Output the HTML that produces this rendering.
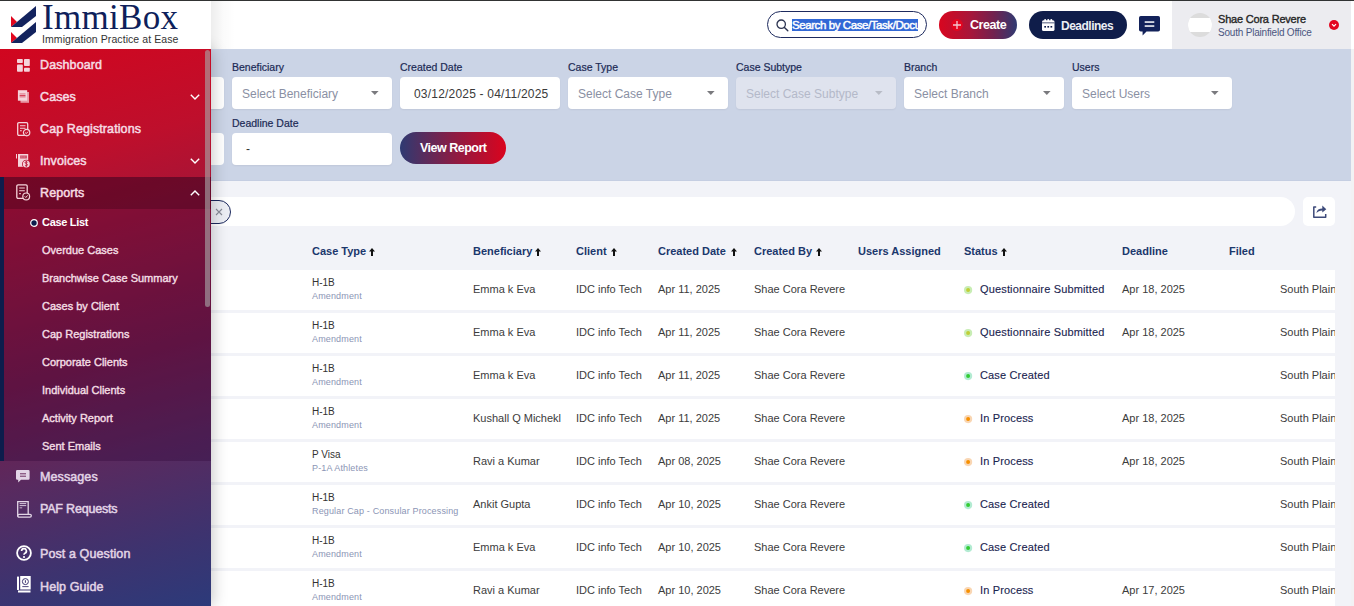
<!DOCTYPE html><html><head><meta charset="utf-8"><style>
*{margin:0;padding:0;box-sizing:border-box}
html,body{width:1354px;height:606px;overflow:hidden;background:#f0f2f7;font-family:"Liberation Sans",sans-serif}
.a{position:absolute}
.t{position:absolute;white-space:nowrap}
svg{position:absolute;overflow:visible}
</style></head><body>
<div class="a" style="left:0px;top:0px;width:1354px;height:606px;background:#f2f3f8"></div>
<div class="a" style="left:211px;top:49px;width:1140px;height:132px;background:#cbd4e6"></div>
<div class="a" style="left:211px;top:180px;width:1140px;height:1px;background:#c5cee2"></div>
<div class="a" style="left:1351px;top:49px;width:3px;height:557px;background:#f2f2f4"></div>
<div class="a" style="left:0px;top:0px;width:1354px;height:49px;background:#fff"></div>
<div class="a" style="left:1172px;top:1px;width:179px;height:48px;background:#ececf0"></div>
<div class="a" style="left:0px;top:0px;width:1354px;height:1px;background:#313333"></div>
<div class="a" style="left:767px;top:11px;width:160px;height:27px;border:1.3px solid #1d2a5e;border-radius:14px;background:#fff"></div>
<svg style="left:776px;top:19px" width="13" height="13" viewBox="0 0 13 13"><circle cx="5.2" cy="5.2" r="4.2" fill="none" stroke="#2b3350" stroke-width="1.3"/><line x1="8.2" y1="8.2" x2="11.8" y2="11.8" stroke="#2b3350" stroke-width="1.4" stroke-linecap="round"/></svg>
<div class="a" style="left:792px;top:19px;width:126px;height:12px;background:#3168d6"></div>
<div class="a" style="left:792px;top:17px;width:126px;height:16px;overflow:hidden"><div class="t" style="left:0px;top:0.73px;font-size:11.5px;line-height:14.38px;font-weight:400;color:#fff;-webkit-text-stroke:0.45px #fff;letter-spacing:-0.42px">Search by Case/Task/Document</div>
</div>
<div class="a" style="left:939px;top:11px;width:78px;height:28px;border-radius:14px;background:linear-gradient(90deg,#d8061f 0%,#a8163a 40%,#72224f 70%,#2f3a72 100%)"></div>
<svg style="left:951px;top:19px" width="12" height="12" viewBox="0 0 12 12"><circle cx="6" cy="6" r="5.9" fill="#e3061f"/><path d="M6 2V10M2 6H10" stroke="#f2c8d0" stroke-width="1.3"/></svg>
<div class="t" style="left:970px;top:18.36px;font-size:12.5px;line-height:15.62px;font-weight:700;color:#fff;letter-spacing:-0.45px">Create</div>
<div class="a" style="left:1029px;top:11px;width:98px;height:28px;border-radius:14px;background:#0f1d4a"></div>
<svg style="left:1042px;top:19px" width="12.5" height="12" viewBox="0 0 12.5 12"><rect x="0" y="1.2" width="12.5" height="10.8" rx="1.6" fill="#fff"/><rect x="2.4" y="0" width="1.6" height="2.4" rx="0.6" fill="#fff"/><rect x="5.45" y="0" width="1.6" height="2.4" rx="0.6" fill="#fff"/><rect x="8.5" y="0" width="1.6" height="2.4" rx="0.6" fill="#fff"/><rect x="0" y="3.4" width="12.5" height="0.9" fill="#0f1d4a" opacity="0.8"/><rect x="2.3" y="7" width="1.7" height="1.6" fill="#0f1d4a"/><rect x="5.4" y="7" width="1.7" height="1.6" fill="#0f1d4a"/><rect x="8.5" y="7" width="1.7" height="1.6" fill="#0f1d4a"/></svg>
<div class="t" style="left:1061px;top:18.84px;font-size:12px;line-height:15.0px;font-weight:700;color:#eceef4;letter-spacing:-0.5px">Deadlines</div>
<svg style="left:1139px;top:16px" width="21" height="20" viewBox="0 0 21 20"><path d="M1.8 0H19.2A1.8 1.8 0 0 1 21 1.8V13.8A1.8 1.8 0 0 1 19.2 15.6H7.5L3.6 19.4V15.6H1.8A1.8 1.8 0 0 1 0 13.8V1.8A1.8 1.8 0 0 1 1.8 0Z" fill="#13225a"/><rect x="5.7" y="5.3" width="9.6" height="1.5" fill="#fff"/><rect x="5.7" y="9.3" width="9.6" height="1.5" fill="#fff"/></svg>
<div class="a" style="left:1188px;top:13px;width:24px;height:24px;border-radius:50%;overflow:hidden;background:#dcdcdc"><div class="a" style="left:0;top:5px;width:24px;height:14px;background:#fff"></div></div>
<div class="t" style="left:1218px;top:12.81px;font-size:11px;line-height:13.75px;font-weight:400;color:#262626;-webkit-text-stroke:0.35px #262626;letter-spacing:-0.2px">Shae Cora Revere</div>
<div class="t" style="left:1218px;top:27.29px;font-size:10px;line-height:12.5px;font-weight:400;color:#4b5680;letter-spacing:-0.2px">South Plainfield Office</div>
<svg style="left:1329px;top:20px" width="10" height="10" viewBox="0 0 10 10"><circle cx="5" cy="5" r="5" fill="#e3061f"/><path d="M3 4.2L5 6.2L7 4.2" fill="none" stroke="#fff" stroke-width="1.2"/></svg>
<div class="t" style="left:232px;top:61.30px;font-size:10.5px;line-height:13.12px;font-weight:400;color:#1b2a55;-webkit-text-stroke:0.2px #1b2a55">Beneficiary</div>
<div class="t" style="left:400px;top:61.30px;font-size:10.5px;line-height:13.12px;font-weight:400;color:#1b2a55;-webkit-text-stroke:0.2px #1b2a55">Created Date</div>
<div class="t" style="left:568px;top:61.30px;font-size:10.5px;line-height:13.12px;font-weight:400;color:#1b2a55;-webkit-text-stroke:0.2px #1b2a55">Case Type</div>
<div class="t" style="left:736px;top:61.30px;font-size:10.5px;line-height:13.12px;font-weight:400;color:#1b2a55;-webkit-text-stroke:0.2px #1b2a55">Case Subtype</div>
<div class="t" style="left:904px;top:61.30px;font-size:10.5px;line-height:13.12px;font-weight:400;color:#1b2a55;-webkit-text-stroke:0.2px #1b2a55">Branch</div>
<div class="t" style="left:1072px;top:61.30px;font-size:10.5px;line-height:13.12px;font-weight:400;color:#1b2a55;-webkit-text-stroke:0.2px #1b2a55">Users</div>
<div class="t" style="left:232px;top:117.30px;font-size:10.5px;line-height:13.12px;font-weight:400;color:#1b2a55;-webkit-text-stroke:0.2px #1b2a55">Deadline Date</div>
<div class="a" style="left:64px;top:77px;width:160px;height:32px;background:#fff;border-radius:4px;box-shadow:0 1px 2px rgba(0,0,0,0.06)"></div>
<div class="a" style="left:232px;top:77px;width:160px;height:32px;background:#fff;border-radius:4px;box-shadow:0 1px 2px rgba(0,0,0,0.06)"></div>
<div class="t" style="left:242px;top:87.34px;font-size:12px;line-height:15.0px;font-weight:400;color:#8a90a3;">Select Beneficiary</div>
<svg style="left:371.2px;top:91px" width="7.6" height="4" viewBox="0 0 7.6 4"><path d="M0 0H7.6L3.8 4Z" fill="#7a7a7e"/></svg>
<div class="a" style="left:400px;top:77px;width:160px;height:32px;background:#fff;border-radius:4px;box-shadow:0 1px 2px rgba(0,0,0,0.06)"></div>
<div class="t" style="left:414px;top:87.34px;font-size:12px;line-height:15.0px;font-weight:400;color:#3a3a3a;letter-spacing:0.2px">03/12/2025 - 04/11/2025</div>
<div class="a" style="left:568px;top:77px;width:160px;height:32px;background:#fff;border-radius:4px;box-shadow:0 1px 2px rgba(0,0,0,0.06)"></div>
<div class="t" style="left:578px;top:87.34px;font-size:12px;line-height:15.0px;font-weight:400;color:#8a90a3;">Select Case Type</div>
<svg style="left:707.2px;top:91px" width="7.6" height="4" viewBox="0 0 7.6 4"><path d="M0 0H7.6L3.8 4Z" fill="#7a7a7e"/></svg>
<div class="a" style="left:736px;top:77px;width:160px;height:32px;background:#dfe3ee;border-radius:4px;box-shadow:0 1px 2px rgba(0,0,0,0.06)"></div>
<div class="t" style="left:746px;top:87.34px;font-size:12px;line-height:15.0px;font-weight:400;color:#b4b9c9;">Select Case Subtype</div>
<svg style="left:875.2px;top:91px" width="7.6" height="4" viewBox="0 0 7.6 4"><path d="M0 0H7.6L3.8 4Z" fill="#b8bcc6"/></svg>
<div class="a" style="left:904px;top:77px;width:160px;height:32px;background:#fff;border-radius:4px;box-shadow:0 1px 2px rgba(0,0,0,0.06)"></div>
<div class="t" style="left:914px;top:87.34px;font-size:12px;line-height:15.0px;font-weight:400;color:#8a90a3;">Select Branch</div>
<svg style="left:1043.2px;top:91px" width="7.6" height="4" viewBox="0 0 7.6 4"><path d="M0 0H7.6L3.8 4Z" fill="#7a7a7e"/></svg>
<div class="a" style="left:1072px;top:77px;width:160px;height:32px;background:#fff;border-radius:4px;box-shadow:0 1px 2px rgba(0,0,0,0.06)"></div>
<div class="t" style="left:1082px;top:87.34px;font-size:12px;line-height:15.0px;font-weight:400;color:#8a90a3;">Select Users</div>
<svg style="left:1211.2px;top:91px" width="7.6" height="4" viewBox="0 0 7.6 4"><path d="M0 0H7.6L3.8 4Z" fill="#7a7a7e"/></svg>
<div class="a" style="left:64px;top:133px;width:160px;height:32px;background:#fff;border-radius:4px"></div>
<div class="a" style="left:232px;top:133px;width:160px;height:32px;background:#fff;border-radius:4px;box-shadow:0 1px 2px rgba(0,0,0,0.06)"></div>
<div class="t" style="left:246px;top:142.34px;font-size:12px;line-height:15.0px;font-weight:400;color:#333;">-</div>
<div class="a" style="left:400px;top:132px;width:106px;height:32px;border-radius:16px;background:linear-gradient(90deg,#2e3a72 0%,#8a1c44 50%,#da041e 100%)"></div>
<div class="t" style="left:420px;top:140.86px;font-size:12.5px;line-height:15.62px;font-weight:700;color:#fff;letter-spacing:-0.5px">View Report</div>
<div class="a" style="left:211px;top:197px;width:1084px;height:29px;background:#fff;border-radius:0 15px 15px 0"></div>
<div class="a" style="left:150px;top:200px;width:81px;height:24px;background:#eceef4;border:1.3px solid #1d2a5e;border-radius:12px"></div>
<svg style="left:216px;top:209px" width="6" height="6" viewBox="0 0 6 6"><path d="M0 0L6 6M6 0L0 6" stroke="#8a8d99" stroke-width="1.1"/></svg>
<div class="a" style="left:1303px;top:197px;width:32px;height:29px;background:#fff;border-radius:5px"></div>
<svg style="left:1313px;top:205px" width="14" height="13" viewBox="0 0 14 13"><path d="M3.2 2H0.8V12.2H12.7V9" fill="none" stroke="#3d4a7a" stroke-width="1.5" stroke-linejoin="round"/><path d="M3.4 8.2C3.8 5 6.2 3.6 9.3 3.6V0.6L13.3 4.2L9.3 7.6V5.6C6.8 5.6 5 6.4 3.4 8.2Z" fill="#3d4a7a"/></svg>
<div class="t" style="left:312px;top:245.31px;font-size:11px;line-height:13.75px;font-weight:700;color:#1b376c;">Case Type</div>
<div class="t" style="left:473px;top:245.31px;font-size:11px;line-height:13.75px;font-weight:700;color:#1b376c;">Beneficiary</div>
<div class="t" style="left:576px;top:245.31px;font-size:11px;line-height:13.75px;font-weight:700;color:#1b376c;">Client</div>
<div class="t" style="left:658px;top:245.31px;font-size:11px;line-height:13.75px;font-weight:700;color:#1b376c;">Created Date</div>
<div class="t" style="left:754px;top:245.31px;font-size:11px;line-height:13.75px;font-weight:700;color:#1b376c;">Created By</div>
<div class="t" style="left:858px;top:245.31px;font-size:11px;line-height:13.75px;font-weight:700;color:#1b376c;">Users Assigned</div>
<div class="t" style="left:964px;top:245.31px;font-size:11px;line-height:13.75px;font-weight:700;color:#1b376c;">Status</div>
<div class="t" style="left:1122px;top:245.31px;font-size:11px;line-height:13.75px;font-weight:700;color:#1b376c;">Deadline</div>
<div class="t" style="left:1229px;top:245.31px;font-size:11px;line-height:13.75px;font-weight:700;color:#1b376c;">Filed</div>
<svg style="left:369px;top:248px" width="6" height="8" viewBox="0 0 6 8"><path d="M3 0L6 3.4H4V8H2V3.4H0Z" fill="#111"/></svg>
<svg style="left:535px;top:248px" width="6" height="8" viewBox="0 0 6 8"><path d="M3 0L6 3.4H4V8H2V3.4H0Z" fill="#111"/></svg>
<svg style="left:611px;top:248px" width="6" height="8" viewBox="0 0 6 8"><path d="M3 0L6 3.4H4V8H2V3.4H0Z" fill="#111"/></svg>
<svg style="left:731px;top:248px" width="6" height="8" viewBox="0 0 6 8"><path d="M3 0L6 3.4H4V8H2V3.4H0Z" fill="#111"/></svg>
<svg style="left:816px;top:248px" width="6" height="8" viewBox="0 0 6 8"><path d="M3 0L6 3.4H4V8H2V3.4H0Z" fill="#111"/></svg>
<svg style="left:1001px;top:248px" width="6" height="8" viewBox="0 0 6 8"><path d="M3 0L6 3.4H4V8H2V3.4H0Z" fill="#111"/></svg>
<div class="a" style="left:211px;top:270px;width:1124px;height:40px;background:#fff"></div>
<div class="t" style="left:312px;top:277.29px;font-size:10px;line-height:12.5px;font-weight:400;color:#333;">H-1B</div>
<div class="t" style="left:312px;top:290.76px;font-size:9px;line-height:11.25px;font-weight:400;color:#8b95b5;letter-spacing:0.15px">Amendment</div>
<div class="t" style="left:473px;top:283.31px;font-size:11px;line-height:13.75px;font-weight:400;color:#3c3c3c;">Emma k Eva</div>
<div class="t" style="left:576px;top:283.31px;font-size:11px;line-height:13.75px;font-weight:400;color:#3c3c3c;">IDC info Tech</div>
<div class="t" style="left:658px;top:283.31px;font-size:11px;line-height:13.75px;font-weight:400;color:#3c3c3c;">Apr 11, 2025</div>
<div class="t" style="left:754px;top:283.31px;font-size:11px;line-height:13.75px;font-weight:400;color:#3c3c3c;">Shae Cora Revere</div>
<svg style="left:963.8px;top:285.8px" width="8.2" height="8.2" viewBox="0 0 8.2 8.2"><circle cx="4.1" cy="4.1" r="4.1" fill="#c8edb4"/><circle cx="4.1" cy="4.1" r="2" fill="#bfcf36"/></svg>
<div class="t" style="left:980px;top:283.31px;font-size:11px;line-height:13.75px;font-weight:400;color:#1b2550;-webkit-text-stroke:0.12px #1b2550;letter-spacing:0.15px">Questionnaire Submitted</div>
<div class="t" style="left:1122px;top:283.31px;font-size:11px;line-height:13.75px;font-weight:400;color:#3c3c3c;">Apr 18, 2025</div>
<div class="a" style="left:1280px;top:280px;width:55px;height:20px;overflow:hidden"><div class="t" style="left:0px;top:3.31px;font-size:11px;line-height:13.75px;font-weight:400;color:#3c3c3c;">South Plainfield</div>
</div>
<div class="a" style="left:211px;top:313px;width:1124px;height:40px;background:#fff"></div>
<div class="t" style="left:312px;top:320.29px;font-size:10px;line-height:12.5px;font-weight:400;color:#333;">H-1B</div>
<div class="t" style="left:312px;top:333.76px;font-size:9px;line-height:11.25px;font-weight:400;color:#8b95b5;letter-spacing:0.15px">Amendment</div>
<div class="t" style="left:473px;top:326.31px;font-size:11px;line-height:13.75px;font-weight:400;color:#3c3c3c;">Emma k Eva</div>
<div class="t" style="left:576px;top:326.31px;font-size:11px;line-height:13.75px;font-weight:400;color:#3c3c3c;">IDC info Tech</div>
<div class="t" style="left:658px;top:326.31px;font-size:11px;line-height:13.75px;font-weight:400;color:#3c3c3c;">Apr 11, 2025</div>
<div class="t" style="left:754px;top:326.31px;font-size:11px;line-height:13.75px;font-weight:400;color:#3c3c3c;">Shae Cora Revere</div>
<svg style="left:963.8px;top:328.8px" width="8.2" height="8.2" viewBox="0 0 8.2 8.2"><circle cx="4.1" cy="4.1" r="4.1" fill="#c8edb4"/><circle cx="4.1" cy="4.1" r="2" fill="#bfcf36"/></svg>
<div class="t" style="left:980px;top:326.31px;font-size:11px;line-height:13.75px;font-weight:400;color:#1b2550;-webkit-text-stroke:0.12px #1b2550;letter-spacing:0.15px">Questionnaire Submitted</div>
<div class="t" style="left:1122px;top:326.31px;font-size:11px;line-height:13.75px;font-weight:400;color:#3c3c3c;">Apr 18, 2025</div>
<div class="a" style="left:1280px;top:323px;width:55px;height:20px;overflow:hidden"><div class="t" style="left:0px;top:3.31px;font-size:11px;line-height:13.75px;font-weight:400;color:#3c3c3c;">South Plainfield</div>
</div>
<div class="a" style="left:211px;top:356px;width:1124px;height:40px;background:#fff"></div>
<div class="t" style="left:312px;top:363.29px;font-size:10px;line-height:12.5px;font-weight:400;color:#333;">H-1B</div>
<div class="t" style="left:312px;top:376.76px;font-size:9px;line-height:11.25px;font-weight:400;color:#8b95b5;letter-spacing:0.15px">Amendment</div>
<div class="t" style="left:473px;top:369.31px;font-size:11px;line-height:13.75px;font-weight:400;color:#3c3c3c;">Emma k Eva</div>
<div class="t" style="left:576px;top:369.31px;font-size:11px;line-height:13.75px;font-weight:400;color:#3c3c3c;">IDC info Tech</div>
<div class="t" style="left:658px;top:369.31px;font-size:11px;line-height:13.75px;font-weight:400;color:#3c3c3c;">Apr 11, 2025</div>
<div class="t" style="left:754px;top:369.31px;font-size:11px;line-height:13.75px;font-weight:400;color:#3c3c3c;">Shae Cora Revere</div>
<svg style="left:963.8px;top:371.8px" width="8.2" height="8.2" viewBox="0 0 8.2 8.2"><circle cx="4.1" cy="4.1" r="4.1" fill="#b3ebd2"/><circle cx="4.1" cy="4.1" r="2" fill="#33cc33"/></svg>
<div class="t" style="left:980px;top:369.31px;font-size:11px;line-height:13.75px;font-weight:400;color:#1b2550;-webkit-text-stroke:0.12px #1b2550;letter-spacing:0.15px">Case Created</div>
<div class="a" style="left:1280px;top:366px;width:55px;height:20px;overflow:hidden"><div class="t" style="left:0px;top:3.31px;font-size:11px;line-height:13.75px;font-weight:400;color:#3c3c3c;">South Plainfield</div>
</div>
<div class="a" style="left:211px;top:399px;width:1124px;height:40px;background:#fff"></div>
<div class="t" style="left:312px;top:406.29px;font-size:10px;line-height:12.5px;font-weight:400;color:#333;">H-1B</div>
<div class="t" style="left:312px;top:419.76px;font-size:9px;line-height:11.25px;font-weight:400;color:#8b95b5;letter-spacing:0.15px">Amendment</div>
<div class="t" style="left:473px;top:412.31px;font-size:11px;line-height:13.75px;font-weight:400;color:#3c3c3c;">Kushall Q Michekl</div>
<div class="t" style="left:576px;top:412.31px;font-size:11px;line-height:13.75px;font-weight:400;color:#3c3c3c;">IDC info Tech</div>
<div class="t" style="left:658px;top:412.31px;font-size:11px;line-height:13.75px;font-weight:400;color:#3c3c3c;">Apr 11, 2025</div>
<div class="t" style="left:754px;top:412.31px;font-size:11px;line-height:13.75px;font-weight:400;color:#3c3c3c;">Shae Cora Revere</div>
<svg style="left:963.8px;top:414.8px" width="8.2" height="8.2" viewBox="0 0 8.2 8.2"><circle cx="4.1" cy="4.1" r="4.1" fill="#f9d6b3"/><circle cx="4.1" cy="4.1" r="2" fill="#f79000"/></svg>
<div class="t" style="left:980px;top:412.31px;font-size:11px;line-height:13.75px;font-weight:400;color:#1b2550;-webkit-text-stroke:0.12px #1b2550;letter-spacing:0.15px">In Process</div>
<div class="t" style="left:1122px;top:412.31px;font-size:11px;line-height:13.75px;font-weight:400;color:#3c3c3c;">Apr 18, 2025</div>
<div class="a" style="left:1280px;top:409px;width:55px;height:20px;overflow:hidden"><div class="t" style="left:0px;top:3.31px;font-size:11px;line-height:13.75px;font-weight:400;color:#3c3c3c;">South Plainfield</div>
</div>
<div class="a" style="left:211px;top:442px;width:1124px;height:40px;background:#fff"></div>
<div class="t" style="left:312px;top:449.29px;font-size:10px;line-height:12.5px;font-weight:400;color:#333;">P Visa</div>
<div class="t" style="left:312px;top:462.76px;font-size:9px;line-height:11.25px;font-weight:400;color:#8b95b5;letter-spacing:0.15px">P-1A Athletes</div>
<div class="t" style="left:473px;top:455.31px;font-size:11px;line-height:13.75px;font-weight:400;color:#3c3c3c;">Ravi a Kumar</div>
<div class="t" style="left:576px;top:455.31px;font-size:11px;line-height:13.75px;font-weight:400;color:#3c3c3c;">IDC info Tech</div>
<div class="t" style="left:658px;top:455.31px;font-size:11px;line-height:13.75px;font-weight:400;color:#3c3c3c;">Apr 08, 2025</div>
<div class="t" style="left:754px;top:455.31px;font-size:11px;line-height:13.75px;font-weight:400;color:#3c3c3c;">Shae Cora Revere</div>
<svg style="left:963.8px;top:457.8px" width="8.2" height="8.2" viewBox="0 0 8.2 8.2"><circle cx="4.1" cy="4.1" r="4.1" fill="#f9d6b3"/><circle cx="4.1" cy="4.1" r="2" fill="#f79000"/></svg>
<div class="t" style="left:980px;top:455.31px;font-size:11px;line-height:13.75px;font-weight:400;color:#1b2550;-webkit-text-stroke:0.12px #1b2550;letter-spacing:0.15px">In Process</div>
<div class="t" style="left:1122px;top:455.31px;font-size:11px;line-height:13.75px;font-weight:400;color:#3c3c3c;">Apr 18, 2025</div>
<div class="a" style="left:1280px;top:452px;width:55px;height:20px;overflow:hidden"><div class="t" style="left:0px;top:3.31px;font-size:11px;line-height:13.75px;font-weight:400;color:#3c3c3c;">South Plainfield</div>
</div>
<div class="a" style="left:211px;top:485px;width:1124px;height:40px;background:#fff"></div>
<div class="t" style="left:312px;top:492.29px;font-size:10px;line-height:12.5px;font-weight:400;color:#333;">H-1B</div>
<div class="t" style="left:312px;top:505.76px;font-size:9px;line-height:11.25px;font-weight:400;color:#8b95b5;letter-spacing:0.15px">Regular Cap - Consular Processing</div>
<div class="t" style="left:473px;top:498.31px;font-size:11px;line-height:13.75px;font-weight:400;color:#3c3c3c;">Ankit Gupta</div>
<div class="t" style="left:576px;top:498.31px;font-size:11px;line-height:13.75px;font-weight:400;color:#3c3c3c;">IDC info Tech</div>
<div class="t" style="left:658px;top:498.31px;font-size:11px;line-height:13.75px;font-weight:400;color:#3c3c3c;">Apr 10, 2025</div>
<div class="t" style="left:754px;top:498.31px;font-size:11px;line-height:13.75px;font-weight:400;color:#3c3c3c;">Shae Cora Revere</div>
<svg style="left:963.8px;top:500.8px" width="8.2" height="8.2" viewBox="0 0 8.2 8.2"><circle cx="4.1" cy="4.1" r="4.1" fill="#b3ebd2"/><circle cx="4.1" cy="4.1" r="2" fill="#33cc33"/></svg>
<div class="t" style="left:980px;top:498.31px;font-size:11px;line-height:13.75px;font-weight:400;color:#1b2550;-webkit-text-stroke:0.12px #1b2550;letter-spacing:0.15px">Case Created</div>
<div class="a" style="left:1280px;top:495px;width:55px;height:20px;overflow:hidden"><div class="t" style="left:0px;top:3.31px;font-size:11px;line-height:13.75px;font-weight:400;color:#3c3c3c;">South Plainfield</div>
</div>
<div class="a" style="left:211px;top:528px;width:1124px;height:40px;background:#fff"></div>
<div class="t" style="left:312px;top:535.28px;font-size:10px;line-height:12.5px;font-weight:400;color:#333;">H-1B</div>
<div class="t" style="left:312px;top:548.76px;font-size:9px;line-height:11.25px;font-weight:400;color:#8b95b5;letter-spacing:0.15px">Amendment</div>
<div class="t" style="left:473px;top:541.31px;font-size:11px;line-height:13.75px;font-weight:400;color:#3c3c3c;">Emma k Eva</div>
<div class="t" style="left:576px;top:541.31px;font-size:11px;line-height:13.75px;font-weight:400;color:#3c3c3c;">IDC info Tech</div>
<div class="t" style="left:658px;top:541.31px;font-size:11px;line-height:13.75px;font-weight:400;color:#3c3c3c;">Apr 10, 2025</div>
<div class="t" style="left:754px;top:541.31px;font-size:11px;line-height:13.75px;font-weight:400;color:#3c3c3c;">Shae Cora Revere</div>
<svg style="left:963.8px;top:543.8px" width="8.2" height="8.2" viewBox="0 0 8.2 8.2"><circle cx="4.1" cy="4.1" r="4.1" fill="#b3ebd2"/><circle cx="4.1" cy="4.1" r="2" fill="#33cc33"/></svg>
<div class="t" style="left:980px;top:541.31px;font-size:11px;line-height:13.75px;font-weight:400;color:#1b2550;-webkit-text-stroke:0.12px #1b2550;letter-spacing:0.15px">Case Created</div>
<div class="a" style="left:1280px;top:538px;width:55px;height:20px;overflow:hidden"><div class="t" style="left:0px;top:3.31px;font-size:11px;line-height:13.75px;font-weight:400;color:#3c3c3c;">South Plainfield</div>
</div>
<div class="a" style="left:211px;top:571px;width:1124px;height:40px;background:#fff"></div>
<div class="t" style="left:312px;top:578.28px;font-size:10px;line-height:12.5px;font-weight:400;color:#333;">H-1B</div>
<div class="t" style="left:312px;top:591.76px;font-size:9px;line-height:11.25px;font-weight:400;color:#8b95b5;letter-spacing:0.15px">Amendment</div>
<div class="t" style="left:473px;top:584.31px;font-size:11px;line-height:13.75px;font-weight:400;color:#3c3c3c;">Ravi a Kumar</div>
<div class="t" style="left:576px;top:584.31px;font-size:11px;line-height:13.75px;font-weight:400;color:#3c3c3c;">IDC info Tech</div>
<div class="t" style="left:658px;top:584.31px;font-size:11px;line-height:13.75px;font-weight:400;color:#3c3c3c;">Apr 10, 2025</div>
<div class="t" style="left:754px;top:584.31px;font-size:11px;line-height:13.75px;font-weight:400;color:#3c3c3c;">Shae Cora Revere</div>
<svg style="left:963.8px;top:586.8px" width="8.2" height="8.2" viewBox="0 0 8.2 8.2"><circle cx="4.1" cy="4.1" r="4.1" fill="#f9d6b3"/><circle cx="4.1" cy="4.1" r="2" fill="#f79000"/></svg>
<div class="t" style="left:980px;top:584.31px;font-size:11px;line-height:13.75px;font-weight:400;color:#1b2550;-webkit-text-stroke:0.12px #1b2550;letter-spacing:0.15px">In Process</div>
<div class="t" style="left:1122px;top:584.31px;font-size:11px;line-height:13.75px;font-weight:400;color:#3c3c3c;">Apr 17, 2025</div>
<div class="a" style="left:1280px;top:581px;width:55px;height:20px;overflow:hidden"><div class="t" style="left:0px;top:3.31px;font-size:11px;line-height:13.75px;font-weight:400;color:#3c3c3c;">South Plainfield</div>
</div>
<div class="a" style="left:0;top:49px;width:211px;height:557px;background:linear-gradient(165deg,#d1061f 0%,#be0f2c 20%,#9a173c 38%,#761b48 55%,#592a5f 72%,#3d336f 88%,#2c3a7a 100%);box-shadow:2px 0 14px rgba(0,0,0,0.22)"></div>
<div class="a" style="left:0px;top:1px;width:211px;height:48px;background:#fff"></div>
<div class="a" style="left:211px;top:1px;width:24px;height:48px;background:linear-gradient(90deg,rgba(0,0,0,0.07),rgba(0,0,0,0.02) 50%,rgba(0,0,0,0))"></div>
<div class="a" style="left:0px;top:177px;width:211px;height:284px;background:rgba(40,0,50,0.29)"></div>
<div class="a" style="left:4px;top:177px;width:207px;height:32px;background:rgba(40,0,15,0.28)"></div>
<div class="a" style="left:0px;top:177px;width:4px;height:284px;background:#0d1d4c"></div>
<div class="a" style="left:205px;top:49.5px;width:5px;height:257.5px;background:rgba(168,168,168,0.62);border-radius:2.5px"></div>
<div class="t" style="left:40px;top:57.86px;font-size:12.5px;line-height:15.62px;font-weight:400;color:#f6dbe2;-webkit-text-stroke:0.5px #f6dbe2;letter-spacing:0.1px">Dashboard</div>
<div class="t" style="left:40px;top:89.86px;font-size:12.5px;line-height:15.62px;font-weight:400;color:#f6dbe2;-webkit-text-stroke:0.5px #f6dbe2;letter-spacing:0.1px">Cases</div>
<div class="t" style="left:40px;top:121.86px;font-size:12.5px;line-height:15.62px;font-weight:400;color:#f6dbe2;-webkit-text-stroke:0.5px #f6dbe2;letter-spacing:0.1px">Cap Registrations</div>
<div class="t" style="left:40px;top:153.86px;font-size:12.5px;line-height:15.62px;font-weight:400;color:#f6dbe2;-webkit-text-stroke:0.5px #f6dbe2;letter-spacing:0.1px">Invoices</div>
<div class="t" style="left:40px;top:185.86px;font-size:12.5px;line-height:15.62px;font-weight:400;color:#f6dbe2;-webkit-text-stroke:0.5px #f6dbe2;letter-spacing:0.1px">Reports</div>
<div class="t" style="left:42px;top:216.31px;font-size:11px;line-height:13.75px;font-weight:700;color:#fff;letter-spacing:-0.3px">Case List</div>
<div class="t" style="left:42px;top:244.31px;font-size:11px;line-height:13.75px;font-weight:400;color:#f3dde3;-webkit-text-stroke:0.4px #f3dde3">Overdue Cases</div>
<div class="t" style="left:42px;top:272.31px;font-size:11px;line-height:13.75px;font-weight:400;color:#f3dde3;-webkit-text-stroke:0.4px #f3dde3">Branchwise Case Summary</div>
<div class="t" style="left:42px;top:300.31px;font-size:11px;line-height:13.75px;font-weight:400;color:#f3dde3;-webkit-text-stroke:0.4px #f3dde3">Cases by Client</div>
<div class="t" style="left:42px;top:328.31px;font-size:11px;line-height:13.75px;font-weight:400;color:#f3dde3;-webkit-text-stroke:0.4px #f3dde3">Cap Registrations</div>
<div class="t" style="left:42px;top:356.31px;font-size:11px;line-height:13.75px;font-weight:400;color:#f3dde3;-webkit-text-stroke:0.4px #f3dde3">Corporate Clients</div>
<div class="t" style="left:42px;top:384.31px;font-size:11px;line-height:13.75px;font-weight:400;color:#f3dde3;-webkit-text-stroke:0.4px #f3dde3">Individual Clients</div>
<div class="t" style="left:42px;top:412.31px;font-size:11px;line-height:13.75px;font-weight:400;color:#f3dde3;-webkit-text-stroke:0.4px #f3dde3">Activity Report</div>
<div class="t" style="left:42px;top:440.31px;font-size:11px;line-height:13.75px;font-weight:400;color:#f3dde3;-webkit-text-stroke:0.4px #f3dde3">Sent Emails</div>
<svg style="left:30px;top:219px" width="8" height="8" viewBox="0 0 8 8"><circle cx="4" cy="4" r="3.3" fill="#0d1d4c" stroke="#fff" stroke-width="1.2"/></svg>
<div class="t" style="left:40px;top:469.86px;font-size:12.5px;line-height:15.62px;font-weight:400;color:#e2d4e6;-webkit-text-stroke:0.5px #e2d4e6;letter-spacing:0.1px">Messages</div>
<div class="t" style="left:40px;top:501.86px;font-size:12.5px;line-height:15.62px;font-weight:400;color:#e2d4e6;-webkit-text-stroke:0.5px #e2d4e6;letter-spacing:-0.2px">PAF Requests</div>
<div class="t" style="left:40px;top:546.86px;font-size:12.5px;line-height:15.62px;font-weight:400;color:#e2d4e6;-webkit-text-stroke:0.5px #e2d4e6;letter-spacing:0.1px">Post a Question</div>
<div class="t" style="left:40px;top:579.86px;font-size:12.5px;line-height:15.62px;font-weight:400;color:#e2d4e6;-webkit-text-stroke:0.5px #e2d4e6;letter-spacing:0.1px">Help Guide</div>
<svg style="left:190px;top:93.5px" width="10" height="6" viewBox="0 0 10 6"><path d="M0.8 0.8L5 5L9.2 0.8" fill="none" stroke="#fff" stroke-width="1.4"/></svg>
<svg style="left:190px;top:157.8px" width="10" height="6" viewBox="0 0 10 6"><path d="M0.8 0.8L5 5L9.2 0.8" fill="none" stroke="#fff" stroke-width="1.4"/></svg>
<svg style="left:190px;top:189.8px" width="10" height="6" viewBox="0 0 10 6"><path d="M0.8 5.2L5 1L9.2 5.2" fill="none" stroke="#fff" stroke-width="1.4"/></svg>
<svg style="left:17px;top:58.5px" width="13" height="13" viewBox="0 0 13 13"><rect x="0" y="0" width="5.8" height="4" rx="0.8" fill="#f5d3da"/><rect x="7" y="0" width="5.8" height="7.1" rx="0.8" fill="#f5d3da"/><rect x="0" y="5.6" width="5.8" height="7.2" rx="0.8" fill="#f5d3da"/><rect x="7" y="8.7" width="5.8" height="4.1" rx="0.8" fill="#f5d3da"/></svg>
<svg style="left:17px;top:90px" width="13" height="13" viewBox="0 0 13 13"><rect x="3.5" y="2" width="8.5" height="10.8" fill="#f5d3da" opacity="0.7"/><rect x="0.9" y="0.2" width="9.3" height="10.5" fill="#f5d3da"/><path d="M2.6 3.3H8.5" stroke="#c8102e" stroke-width="0.6" opacity="0.6"/><rect x="2.6" y="4.7" width="5.9" height="1.7" fill="#c8102e" opacity="0.75"/><path d="M2.6 7.2H8.5" stroke="#c8102e" stroke-width="0.6" opacity="0.5"/></svg>
<svg style="left:17px;top:121.5px" width="13" height="15" viewBox="0 0 13 15"><rect x="0.7" y="0.7" width="10" height="12.6" rx="1.2" fill="none" stroke="#f5d3da" stroke-width="1.3"/><path d="M3 3.8H8.5M3 6.3H8.5M3 8.8H4.8" stroke="#f5d3da" stroke-width="1.1"/><circle cx="9.6" cy="10.6" r="3.2" fill="#c00f2c" stroke="#f5d3da" stroke-width="1.2"/><path d="M8.2 10.6L9.3 11.6L11 9.7" fill="none" stroke="#f5d3da" stroke-width="1"/></svg>
<svg style="left:16px;top:154px" width="14" height="15" viewBox="0 0 14 15"><rect x="0" y="0" width="1" height="4.5" fill="#f5d3da"/><rect x="2" y="0" width="10.2" height="12.8" fill="#f5d3da"/><rect x="4.1" y="1.5" width="6.8" height="3" fill="#b81232" opacity="0.7"/><path d="M5.2 2.2V3.8M7 2.2V3.8M8.8 2.2V3.8" stroke="#f5d3da" stroke-width="0.7" opacity="0.6"/><circle cx="10.3" cy="10" r="4.3" fill="#b81232"/><circle cx="10.3" cy="10" r="3.5" fill="#f5d3da"/><path d="M11.5 8.3C11 7.7 9.2 7.6 9.1 8.6C9 9.6 11.6 9.6 11.5 10.9C11.4 12 9.5 11.9 9 11.3M10.3 7V12.9" fill="none" stroke="#b81232" stroke-width="0.9"/></svg>
<svg style="left:16px;top:183.5px" width="14" height="16" viewBox="0 0 14 16"><rect x="0.8" y="0.8" width="10.4" height="13.6" rx="1.3" fill="none" stroke="#f5d3da" stroke-width="1.3"/><path d="M3.2 4H8.8M3.2 6.8H8.8M3.2 9.6H4.8" stroke="#f5d3da" stroke-width="1.1"/><circle cx="10.2" cy="12.4" r="3.4" fill="#6a1028" stroke="#f5d3da" stroke-width="1.2"/><path d="M8.7 12.4L9.8 13.5L11.6 11.4" fill="none" stroke="#f5d3da" stroke-width="1"/></svg>
<svg style="left:16px;top:470px" width="14" height="13" viewBox="0 0 14 13"><path d="M1.2 0H12.4A1.2 1.2 0 0 1 13.6 1.2V8.6A1.2 1.2 0 0 1 12.4 9.8H5L2.2 12.6V9.8H1.2A1.2 1.2 0 0 1 0 8.6V1.2A1.2 1.2 0 0 1 1.2 0Z" fill="#e2d5e6"/><path d="M4 3.8H10M4 6.2H10" stroke="#6b2d5f" stroke-width="1"/></svg>
<svg style="left:17px;top:501px" width="15" height="17" viewBox="0 0 15 17"><path d="M11.2 13.5V0.7H0.7V15.5" fill="none" stroke="#e2d5e6" stroke-width="1.3"/><rect x="0.7" y="13.3" width="13.6" height="2.8" rx="1.3" fill="none" stroke="#e2d5e6" stroke-width="1.3"/><path d="M2.6 2.6H9.2M2.6 4.6H9.2" stroke="#e2d5e6" stroke-width="0.9"/><path d="M2.6 6.8H5.2" stroke="#e2d5e6" stroke-width="1.1" opacity="0.7"/></svg>
<svg style="left:16px;top:544.5px" width="16" height="16" viewBox="0 0 16 16"><circle cx="8" cy="8" r="6.9" fill="none" stroke="#fff" stroke-width="1.8"/><path d="M5.6 6A2.4 2.4 0 1 1 8.9 8.2C8.2 8.5 8 8.9 8 9.8" fill="none" stroke="#fff" stroke-width="1.7"/><circle cx="8" cy="12" r="1.1" fill="#fff"/></svg>
<svg style="left:17px;top:576px" width="14" height="17" viewBox="0 0 14 17"><rect x="0" y="0.5" width="2" height="13.5" rx="0.5" fill="#fff"/><rect x="3.2" y="0" width="10.5" height="13.5" fill="#fff"/><circle cx="8.4" cy="5.6" r="3" fill="none" stroke="#3d3570" stroke-width="1"/><rect x="7.9" y="4.2" width="1" height="2.6" fill="#3d3570"/><rect x="5.3" y="10.2" width="6.3" height="0.9" fill="#3d3570"/><rect x="1" y="14.5" width="12.5" height="2" fill="#fff"/></svg>
<svg style="left:11px;top:5px" width="26" height="39" viewBox="0 0 26 39"><path d="M0 11L6 17L0 22Z" fill="#e0061e"/><path d="M0 27L6 33L0 38Z" fill="#e0061e"/><path d="M0 22L25 1V11L11 22Z" fill="#13235e"/><path d="M0 38L25 17V27L11 38Z" fill="#13235e"/></svg>
<div class="t" style="left:42px;top:-4.50px;font-size:35px;line-height:43.75px;font-weight:400;color:#0e1f5b;font-family:'Liberation Serif',serif;letter-spacing:0.3px">ImmiBox</div>
<div class="t" style="left:42px;top:33.30px;font-size:10.5px;line-height:13.12px;font-weight:400;color:#333;letter-spacing:0.08px">Immigration Practice at Ease</div>
</body></html>
